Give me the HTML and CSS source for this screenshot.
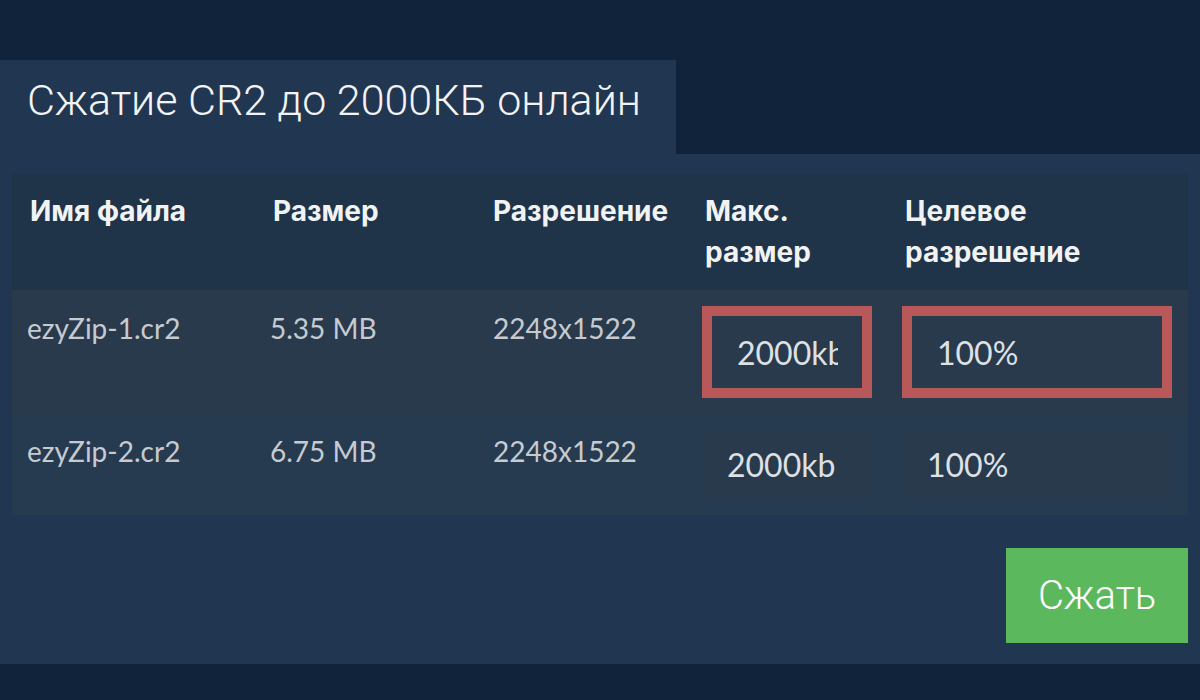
FILE: index.html
```html
<!DOCTYPE html>
<html lang="ru">
<head>
    <meta charset="UTF-8">
    <meta name="viewport" content="width=device-width, initial-scale=1.0">
    <title>Сжатие CR2 до 2000КБ онлайн</title>
    <link rel="stylesheet" href="styles.css">
</head>
<body>
    <div id="compress_box">
        <div class="tab">
            <h1>Сжатие CR2 до 2000КБ онлайн</h1>
        </div>
        <div class="panel">
            <div class="file_table">
                <div class="row head">
                    <div class="cell">Имя файла</div>
                    <div class="cell">Размер</div>
                    <div class="cell">Разрешение</div>
                    <div class="cell">Макс.<br>размер</div>
                    <div class="cell">Целевое<br>разрешение</div>
                </div>
                <div class="row odd">
                    <div class="cell">ezyZip-1.cr2</div>
                    <div class="cell">5.35 MB</div>
                    <div class="cell">2248x1522</div>
                    <div class="cell"><input type="text" class="size_input error" value="2000kb"></div>
                    <div class="cell"><input type="text" class="res_input error" value="100%"></div>
                </div>
                <div class="row even">
                    <div class="cell">ezyZip-2.cr2</div>
                    <div class="cell">6.75 MB</div>
                    <div class="cell">2248x1522</div>
                    <div class="cell"><input type="text" class="size_input" value="2000kb"></div>
                    <div class="cell"><input type="text" class="res_input" value="100%"></div>
                </div>
            </div>
            <div class="actions">
                <button class="compress_btn">Сжать</button>
            </div>
        </div>
    </div>
</body>
</html>
```

FILE: styles.css
```css
body {
    margin: 0;
    padding: 0;
    background-color: #10233a;
    font-family: Lato, "Liberation Sans", sans-serif;
}

#compress_box {
    padding-top: 60px;
}

.tab {
    width: 676px;
    height: 94px;
    box-sizing: border-box;
    padding-left: 27px;
    background-color: #213650;
}

h1 {
    margin: 0;
    font-family: Roboto, "Liberation Sans", sans-serif;
    font-weight: 300;
    font-size: 43px;
    line-height: 80px;
    color: #f2f3f4;
}

.panel {
    background-color: #213650;
    padding: 20px 12px 21px 12px;
}

.file_table {
    display: flex;
    flex-direction: column;
    background-color: #1f3449;
}

.row {
    display: grid;
    grid-template-columns: 243px 220px 212px 200px 1fr;
}

.row .cell {
    padding: 16px 15px 15px 15px;
    font-size: 28px;
    line-height: 44px;
    color: #c6cbd1;
}

.row .cell:nth-child(3) {
    padding-left: 18px;
}

.head .cell {
    padding: 17px 18px 17px 18px;
    font-family: Inter, sans-serif;
    font-size: 28px;
    font-weight: 700;
    line-height: 41px;
    color: #f1f2f3;
}

.odd {
    background-color: #2a3a4d;
}

.even {
    background-color: #263a50;
}

input {
    display: block;
    box-sizing: border-box;
    margin: 0;
    padding: 0 24px 0 25px;
    height: 71px;
    border: none;
    outline: none;
    font-family: Lato, "Liberation Sans", sans-serif;
    font-size: 32px;
    color: #dde1e5;
    background-color: #283a4c;
}

.size_input {
    width: 170px;
}

.res_input {
    width: 270px;
}

input.error {
    height: 92px;
    border: 10px solid #b85859;
}

.actions {
    display: flex;
    justify-content: flex-end;
    margin-top: 33px;
}

.compress_btn {
    width: 182px;
    height: 95px;
    border: none;
    background-color: #5cb85c;
    color: #ffffff;
    font-family: Roboto, "Liberation Sans", sans-serif;
    font-weight: 300;
    font-size: 40px;
    cursor: pointer;
}
```
